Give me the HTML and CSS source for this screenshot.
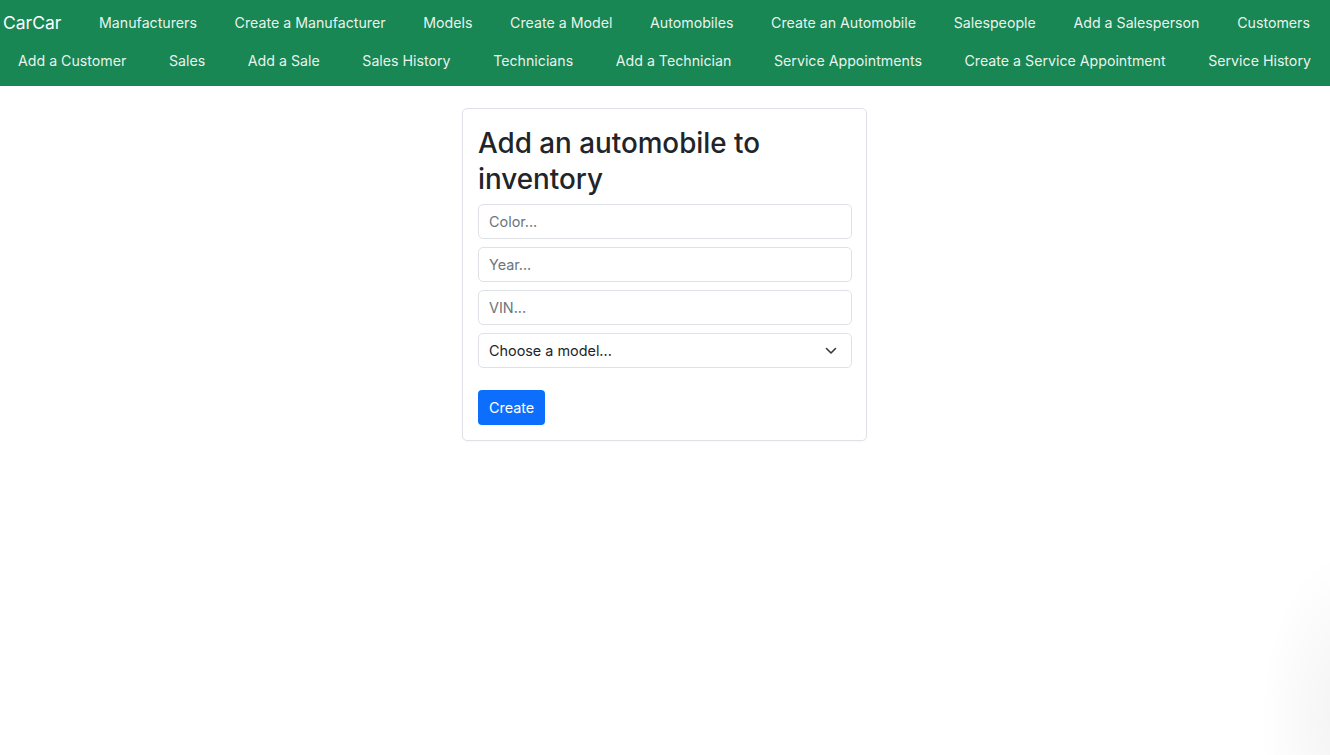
FILE: index.html
```html
<!DOCTYPE html>
<html lang="en">
<head>
<meta charset="utf-8">
<title>CarCar</title>
<link rel="stylesheet" href="styles.css">
</head>
<body>
<nav class="navbar">
  <ul class="nav-row nav-row-first">
    <li><a class="brand" href="#">CarCar</a></li>
    <li><a class="nav-link" href="#">Manufacturers</a></li>
    <li><a class="nav-link" href="#">Create a Manufacturer</a></li>
    <li><a class="nav-link" href="#">Models</a></li>
    <li><a class="nav-link" href="#">Create a Model</a></li>
    <li><a class="nav-link" href="#">Automobiles</a></li>
    <li><a class="nav-link" href="#">Create an Automobile</a></li>
    <li><a class="nav-link" href="#">Salespeople</a></li>
    <li><a class="nav-link" href="#">Add a Salesperson</a></li>
    <li><a class="nav-link" href="#">Customers</a></li>
  </ul>
  <ul class="nav-row nav-row-second">
    <li><a class="nav-link" href="#">Add a Customer</a></li>
    <li><a class="nav-link" href="#">Sales</a></li>
    <li><a class="nav-link" href="#">Add a Sale</a></li>
    <li><a class="nav-link" href="#">Sales History</a></li>
    <li><a class="nav-link" href="#">Technicians</a></li>
    <li><a class="nav-link" href="#">Add a Technician</a></li>
    <li><a class="nav-link" href="#">Service Appointments</a></li>
    <li><a class="nav-link" href="#">Create a Service Appointment</a></li>
    <li><a class="nav-link" href="#">Service History</a></li>
  </ul>
</nav>
<main class="page">
  <div class="card">
    <h1 class="card-title">Add an automobile to inventory</h1>
    <form class="form">
      <input class="field" type="text" placeholder="Color...">
      <input class="field" type="text" placeholder="Year...">
      <input class="field" type="text" placeholder="VIN...">
      <div class="select">
        <span>Choose a model...</span>
        <svg class="chevron" width="12" height="8" viewBox="0 0 12 8"><path d="M1.5 1.5 6 6l4.5-4.5" fill="none" stroke="#343a40" stroke-width="1.6" stroke-linecap="round" stroke-linejoin="round"/></svg>
      </div>
      <button class="btn" type="button">Create</button>
    </form>
  </div>
</main>
</body>
</html>
```
FILE: styles.css
```css
* { box-sizing: border-box; }
html, body { margin: 0; padding: 0; }
body {
  font-family: Inter, "Liberation Sans", sans-serif;
  color: #212529;
  background: #fff;
  min-height: 755px;
  background-image: radial-gradient(ellipse 90px 170px at 1350px 720px, rgba(0,0,0,0.05), rgba(0,0,0,0) 100%);
  background-repeat: no-repeat;
}
.navbar {
  background: #198754;
  padding-bottom: 10px;
}
.nav-row {
  list-style: none;
  margin: 0;
  display: flex;
  justify-content: space-between;
  align-items: center;
}
.nav-row-first { height: 44px; padding: 0 20px 0 3px; }
.nav-row-second { height: 32px; padding: 0 19px 0 18px; }
.nav-row a { color: rgba(255,255,255,0.92); text-decoration: none; white-space: nowrap; }
.brand { font-size: 17.5px; color: #fff !important; }
.nav-link { font-size: 14.2px; }
.page { display: flex; justify-content: center; padding-top: 22px; padding-right: 1px; }
.card {
  width: 405px;
  border: 1px solid #dee2e6;
  border-radius: 5px;
  padding: 16px 14px 15px 15px;
  box-shadow: 0 1px 2px rgba(0,0,0,0.03);
}
.card-title {
  margin: 0 0 7px;
  font-size: 27.8px;
  line-height: 36px;
  font-weight: 500;
}
.form { display: flex; flex-direction: column; align-items: flex-start; }
.field, .select {
  width: 100%;
  height: 35px;
  border: 1px solid #dee2e6;
  border-radius: 5px;
  padding: 0 10px;
  font: inherit;
  font-size: 14.4px;
  color: #212529;
  margin-bottom: 8px;
  background: #fff;
}
.field::placeholder { color: #6c757d; }
.select {
  display: flex;
  align-items: center;
  justify-content: space-between;
  padding-right: 14px;
  margin-bottom: 22px;
}
.btn {
  height: 35px;
  padding: 0 11px;
  border: none;
  border-radius: 4px;
  background: #0d6efd;
  color: #fff;
  font: inherit;
  font-size: 14.4px;
}
```
